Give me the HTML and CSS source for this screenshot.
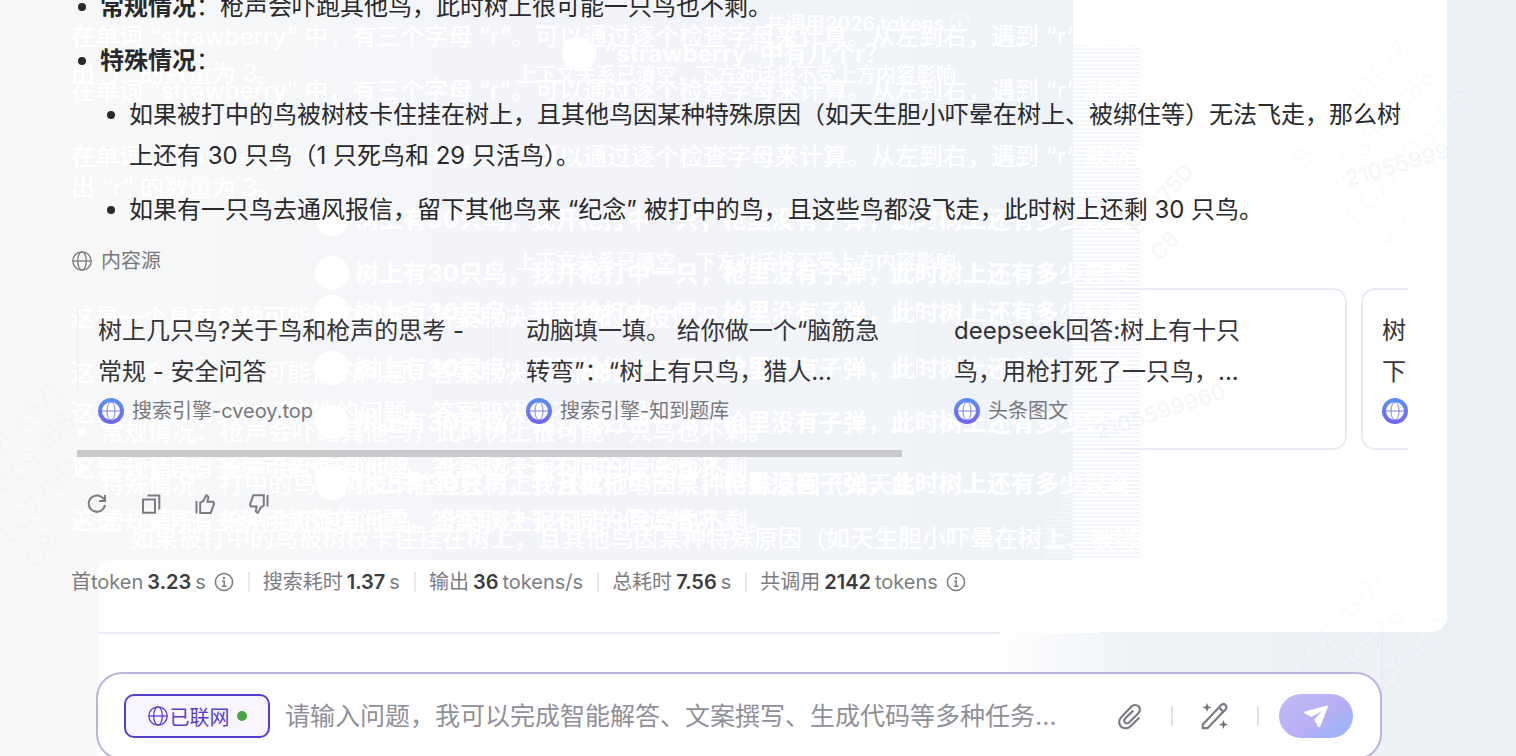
FILE: index.html
```html
<!DOCTYPE html>
<html lang="zh-CN">
<head>
<meta charset="utf-8">
<title>智能问答</title>
<link rel="stylesheet" href="styles.css">
</head>
<body>
<svg class="symbols" aria-hidden="true">
  <defs>
    <linearGradient id="badge" x1="0" y1="0" x2="0" y2="1"><stop offset="0" stop-color="#5791f2"/><stop offset="1" stop-color="#7464ee"/></linearGradient>
    <symbol id="globe" viewBox="0 0 20 20"><g fill="none" stroke="currentColor" stroke-width="1.3"><circle cx="10" cy="10" r="9.2"/><ellipse cx="10" cy="10" rx="4.3" ry="9.2"/><path d="M.8 10h18.4"/></g></symbol>
    <symbol id="source" viewBox="0 0 26 26"><circle cx="13" cy="13" r="13" fill="url(#badge)"/><circle cx="13" cy="13" r="9" fill="#fff"/><g fill="none" stroke="#7c83dc" stroke-width="1"><ellipse cx="13" cy="13" rx="4" ry="9"/><path d="M4 13h18"/></g></symbol>
    <symbol id="info" viewBox="0 0 20 20"><circle cx="10" cy="10" r="8.6" fill="none" stroke="currentColor" stroke-width="1.5"/><circle cx="10" cy="6" r="1.2" fill="currentColor"/><path d="M8.2 9h2v5M7.8 14.2h4.6" fill="none" stroke="currentColor" stroke-width="1.5"/></symbol>
  </defs>
</svg>
<main class="page">
  <div class="panel"></div>
  <svg class="trail" aria-hidden="true">
    <defs>
      <pattern id="stripes" width="8" height="4" patternUnits="userSpaceOnUse"><path d="M0 1h8" stroke="#f3f6fb" stroke-width="2"/></pattern>
      <linearGradient id="fade"><stop offset="0" stop-color="#fff"/><stop offset=".85" stop-color="#fff"/><stop offset="1" stop-color="#fff" stop-opacity="0"/></linearGradient>
      <clipPath id="edge"><rect width="1140" height="560"/></clipPath>
      <g id="berry"><text x="71">在单词 “strawberry” 中，有三个字母 “r”。可以通过逐个检查字母来计算。从左到右，遇到 “r” 就将计</text></g>
      <g id="birds"><circle cx="332" cy="-9" r="17"/><text x="355" class="heavy">树上有30只鸟，我开枪打中一只，枪里没有子弹，此时树上还有多少只鸟</text></g>
      <g id="intro"><text x="71">这是一个具有多种可能性的问题，答案取决于不同的假设情况。</text></g>
      <g id="usual"><circle cx="82" cy="-8" r="4"/><text x="100">常规情况：枪声会吓跑其他鸟，此时树上很可能一只鸟也不剩。</text></g>
    </defs>
    <path d="M1073 45H1140V560H1045V515H1060V475H1073Z" fill="url(#stripes)"/>
    <g clip-path="url(#edge)" fill="#fff">
      <use href="#berry" y="45"/><use href="#berry" y="99"/><use href="#berry" y="165"/>
      <text x="71" y="82">出 “r” 的数量为 3。</text><text x="71" y="196">出 “r” 的数量为 3。</text>
      <circle cx="579" cy="54" r="17"/><text x="604" y="62" class="heavy">“strawberry”中有几个r？</text>
      <text x="516" y="82" class="small">上下文关系已清空，下方对话将不受上方内容影响</text>
      <text x="516" y="269" class="small">上下文关系已清空，下方对话将不受上方内容影响</text>
      <text x="765" y="31" class="small">共调用2026 tokens ⓘ</text>
      <use href="#birds" y="228"/><use href="#birds" y="282"/><use href="#birds" y="321"/><use href="#birds" y="377"/><use href="#birds" y="431"/><use href="#birds" y="492"/>
      <use href="#intro" y="326"/><use href="#intro" y="381"/><use href="#intro" y="421"/><use href="#intro" y="476"/><use href="#intro" y="529"/>
      <use href="#usual" y="440"/><use href="#usual" y="477"/><use href="#usual" y="530"/>
      <text x="100" y="493">特殊情况：打中的鸟被树枝卡住挂在树上，且其他鸟因某种特殊原因（如天生</text>
      <text x="130" y="547">如果被打中的鸟被树枝卡住挂在树上，且其他鸟因某种特殊原因（如天生胆小吓晕在树上、被绑住</text>
    </g>
    <path d="M97 633V576Q97 560 113 560H1100V633Z" fill="#fff"/>
    <path d="M97 633H1140V756H97Z" fill="url(#fade)"/>
    <path d="M97 633H1000" stroke="#ececf6" stroke-width="2"/>
    <path d="M98 590V700" stroke="#f2f1fb"/><path d="M1382 633V700" stroke="#e6e3f2"/>
    <g class="mark">
      <text transform="translate(1305 170) rotate(-48)">B12C2F497E</text>
      <text transform="translate(1330 197) rotate(-48)">B756109368</text>
      <text transform="translate(1358 226) rotate(-48)">EC275D55ED</text>
      <text transform="translate(1384 248) rotate(-48)">C8</text>
      <text transform="translate(1283 700) rotate(-48)">B12C2F497E</text>
      <text transform="translate(1310 724) rotate(-48)">B756109368</text>
      <text transform="translate(1336 754) rotate(-48)">EC275D55ED</text>
      <text transform="translate(1138 236) rotate(-48)" class="strong">EC275D</text>
      <text transform="translate(1160 262) rotate(-48)" class="strong">C8</text>
      <text transform="translate(1348 187) rotate(-16)" class="strong">21055999</text>
      <text transform="translate(1098 440) rotate(-18)" class="strong">2105599960</text>
      <text transform="translate(1 460) rotate(-48)">2F497E</text>
      <text transform="translate(2 505) rotate(-48)">6109368</text>
      <text transform="translate(11 545) rotate(-48)">EC275D</text>
      <text transform="translate(36 570) rotate(-48)">C8</text>
    </g>
  </svg>

  <article class="answer">
    <ul class="points">
      <li><strong>常规情况</strong>：枪声会吓跑其他鸟，此时树上很可能一只鸟也不剩。</li>
      <li><strong>特殊情况</strong>：
        <ul class="points">
          <li>如果被打中的鸟被树枝卡住挂在树上，且其他鸟因某种特殊原因（如天生胆小吓晕在树上、被绑住等）无法飞走，那么树<br>上还有 30 只鸟（1 只死鸟和 29 只活鸟）。</li>
          <li>如果有一只鸟去通风报信，留下其他鸟来 “纪念” 被打中的鸟，且这些鸟都没飞走，此时树上还剩 30 只鸟。</li>
        </ul>
      </li>
    </ul>
    <h2 class="label"><svg class="i20"><use href="#globe"/></svg>内容源</h2>
    <div class="cards">
      <section class="card bare"><h3>树上几只鸟?关于鸟和枪声的思考 -<br>常规 - 安全问答</h3><p><svg class="i26"><use href="#source"/></svg>搜索引擎-cveoy.top</p></section>
      <section class="card bare"><h3>动脑填一填。 给你做一个“脑筋急<br>转弯”：“树上有只鸟，猎人...</h3><p><svg class="i26"><use href="#source"/></svg>搜索引擎-知到题库</p></section>
      <section class="card faded"><h3>deepseek回答:树上有十只<br>鸟，用枪打死了一只鸟，...</h3><p><svg class="i26"><use href="#source"/></svg>头条图文</p></section>
      <section class="card"><h3>树<br>下</h3><p><svg class="i26"><use href="#source"/></svg></p></section>
    </div>
    <div class="scroll"><div class="thumb"></div></div>
    <div class="actions">
      <button aria-label="重新生成"><svg viewBox="0 0 20 20"><path d="M17 5.5A8.2 8.2 0 1 0 18 11M18 1v6h-6"/></svg></button>
      <button aria-label="复制"><svg viewBox="0 0 20 20"><path d="M2 5.5h12v13.3H2zM6.500 1.500h11.800v14"/></svg></button>
      <button aria-label="赞"><svg viewBox="0 0 20 20"><path d="M1.500 7v12.500M5.200 8.500V19h10.500l3.400-9.500-1-1.800h-5.600l.8-5-2-1.400-3 5.600z"/></svg></button>
      <button aria-label="踩"><svg viewBox="0 0 20 20"><path d="M18.500 1v11.500M14.800 11.500V1.200H4.300L1 10.700l1 1.800h5.600l-.8 5 2 1.400 3-5.600z"/></svg></button>
    </div>
    <div class="stats">
      <span>首token <b>3.23</b> s<svg class="i20"><use href="#info"/></svg></span>
      <span>搜索耗时 <b>1.37</b> s</span>
      <span>输出 <b>36</b> tokens/s</span>
      <span>总耗时 <b>7.56</b> s</span>
      <span>共调用 <b>2142</b> tokens<svg class="i20"><use href="#info"/></svg></span>
    </div>
  </article>

  <form class="composer">
    <button type="button" class="online"><svg class="i20"><use href="#globe"/></svg>已联网<i></i></button>
    <input type="text" aria-label="问题" placeholder="请输入问题，我可以完成智能解答、文案撰写、生成代码等多种任务...">
    <div class="tools">
      <button type="button" aria-label="附件"><svg viewBox="0 0 28 28"><path d="M24.500 15.500 15.500 24.300c-2.700 2.600-7 2.700-9.500.2s-2.400-6.500.2-9.200L16.500 4.600c2-2 5-2.200 7-.3s1.800 4.900-.2 7L14.300 20.200c-1.300 1.300-3.200 1.400-4.300.3s-1-2.900.3-4.200L18.300 8.600"/></svg></button>
      <span class="rule"></span>
      <button type="button" aria-label="润色"><svg viewBox="0 0 28 28"><path d="M1.800 22.500 20 3.200c1.300-1.400 3.200-1.400 4.500-.2s1.300 3.100 0 4.500L6.500 26.200H1.800zM18 5.500l4.400 4.400"/><path class="solid" d="M6 1l1.200 3.300L10.500 5.500 7.200 6.700 6 10 4.800 6.700 1.500 5.500l3.300-1.200zM22.500 18l1.200 3.300 3.300 1.200-3.300 1.200-1.200 3.300-1.200-3.300-3.300-1.200 3.300-1.200z"/></svg></button>
      <span class="rule"></span>
    </div>
    <button class="send" aria-label="发送"><svg viewBox="0 0 26 24"><path d="M2 7.500 24 1.500q1.500-.2 1 1.200L17.500 22q-1.500 2.500-3 0l-3.200-6.500L19 7 8.500 13 1.800 9.500q-1.200-1.200.2-2z"/></svg></button>
  </form>
</main>
</body>
</html>
```

FILE: styles.css
```css
* { box-sizing: border-box; }
body {
  margin: 0;
  font-family: Inter, "Noto Sans CJK SC", sans-serif;
  color: #29292b;
}
.symbols { position: absolute; width: 0; height: 0; }
.page {
  position: relative;
  height: 100vh;
  overflow: hidden;
  background: linear-gradient(90deg, #f8f8f8 0, #f6f7f8 14%, #f3f4f9 36%, #eff3f8 68%, #ecf1f6 100%);
}
.panel {
  position: absolute;
  top: 0;
  right: 69px;
  width: 374px;
  height: 632px;
  border-radius: 0 0 16px 0;
  background: #fff;
}
.trail { position: absolute; top: 0; left: 0; width: 100%; height: 100%; }
.trail text { font-size: 24px; font-weight: 500; }
.trail .heavy { font-weight: 700; }
.trail .small { font-size: 20px; }
.trail .mark text { font-size: 27px; font-weight: 400; fill: #7886a0; fill-opacity: .03; }
.trail .mark .strong { font-size: 22px; font-weight: 600; fill-opacity: .08; }
.answer { position: relative; margin: -14px 108px 0 71px; }
.points {
  display: flex;
  flex-direction: column;
  gap: 13px;
  margin: 0;
  padding-left: 29px;
  font-size: 24px;
  line-height: 41px;
  list-style: none;
  white-space: nowrap;
}
.points .points { margin-top: 13px; }
.points li { position: relative; }
.points li::before {
  content: "";
  position: absolute;
  top: 17px;
  left: -22px;
  width: 8px;
  height: 8px;
  border-radius: 50%;
  background: #29292b;
}
strong { font-weight: 700; }
.i20 { width: 20px; height: 20px; flex: none; }
.i26 { width: 26px; height: 26px; flex: none; }
.label {
  display: flex;
  align-items: center;
  gap: 9px;
  margin: 16px 0 12px;
  padding-left: 1px;
  font-size: 20px;
  font-weight: 400;
  line-height: 30px;
  color: #77787d;
}
.cards { display: flex; gap: 14px; margin-left: 6px; overflow: hidden; }
.card {
  position: relative;
  flex: none;
  width: 414px;
  height: 162px;
  padding: 22px 21px;
}
.card::before {
  content: "";
  position: absolute;
  inset: 0;
  border: 2px solid #ebe9f4;
  border-radius: 14px;
}
.bare::before { border-color: transparent #eeedf4; border-width: 0 1px; border-radius: 0; inset: 20px 0 60px; }
.faded::before { mask-image: linear-gradient(90deg, transparent 30%, #000 52%); }
.card h3 { margin: 0; font-size: 24px; font-weight: 400; line-height: 41px; color: #343438; white-space: nowrap; }
.card p { display: flex; align-items: center; gap: 8px; margin: 6px 0 0; font-size: 20px; line-height: 26px; color: #77787d; }
.scroll { margin-left: 6px; }
.thumb { width: 62%; height: 7px; background: #c9c9cb; }
.actions { display: flex; gap: 34px; margin: 37px 0 0 16px; }
.actions button, .tools button { display: block; padding: 0; border: 0; background: none; }
.actions svg { display: block; width: 20px; height: 20px; }
.actions path, .tools path { fill: none; stroke: #7b7c81; stroke-width: 2; }
.stats {
  display: flex;
  margin-top: 53px;
  font-size: 20px;
  line-height: 30px;
  color: #7c7d82;
  white-space: nowrap;
}
.stats span { display: flex; align-items: center; gap: 4px; }
.stats span + span { margin-left: 14px; }
.stats span + span::before { content: ""; width: 2px; height: 20px; margin-right: 9px; background: #e9e8f2; }
.stats b { font-weight: 600; color: #3d3d41; }
.stats .i20 { margin-left: 4px; }
.composer {
  position: relative;
  display: flex;
  align-items: center;
  height: 88px;
  margin: 75px 134px 0 96px;
  padding: 0 27px 0 26px;
  border: 2px solid #bcb3de;
  border-radius: 26px;
  background: #fff;
}
.online {
  display: flex;
  align-items: center;
  justify-content: center;
  gap: 2px;
  width: 146px;
  height: 44px;
  padding: 0;
  border: 2px solid #5a3dce;
  border-radius: 10px;
  background: #f8f5fe;
  font-family: inherit;
  font-size: 20px;
  color: #5a3dce;
}
.online i { width: 10px; height: 10px; margin-left: 5px; border-radius: 50%; background: #4ca346; }
.composer input {
  flex: 1;
  min-width: 0;
  height: 44px;
  margin-left: 15px;
  padding: 0;
  border: 0;
  outline: 0;
  background: none;
  font-family: inherit;
  font-size: 25px;
  color: #29292b;
}
.composer input::placeholder { color: #8f9098; opacity: 1; }
.tools { display: flex; align-items: center; gap: 28px; margin-right: 20px; }
.tools svg { display: block; width: 28px; height: 28px; }
.tools path { stroke-width: 2.2; }
.tools .solid { fill: #74757b; stroke: none; }
.rule { width: 2px; height: 20px; background: #e2e2e8; }
.send {
  display: grid;
  place-items: center;
  width: 74px;
  height: 44px;
  padding: 0;
  border: 0;
  border-radius: 22px;
  background: linear-gradient(145deg, #bdb9f3 15%, #b8aef4 55%, #9fb4f8 85%);
}
.send svg { width: 26px; height: 24px; }
.send path { fill: #fff; }
```
